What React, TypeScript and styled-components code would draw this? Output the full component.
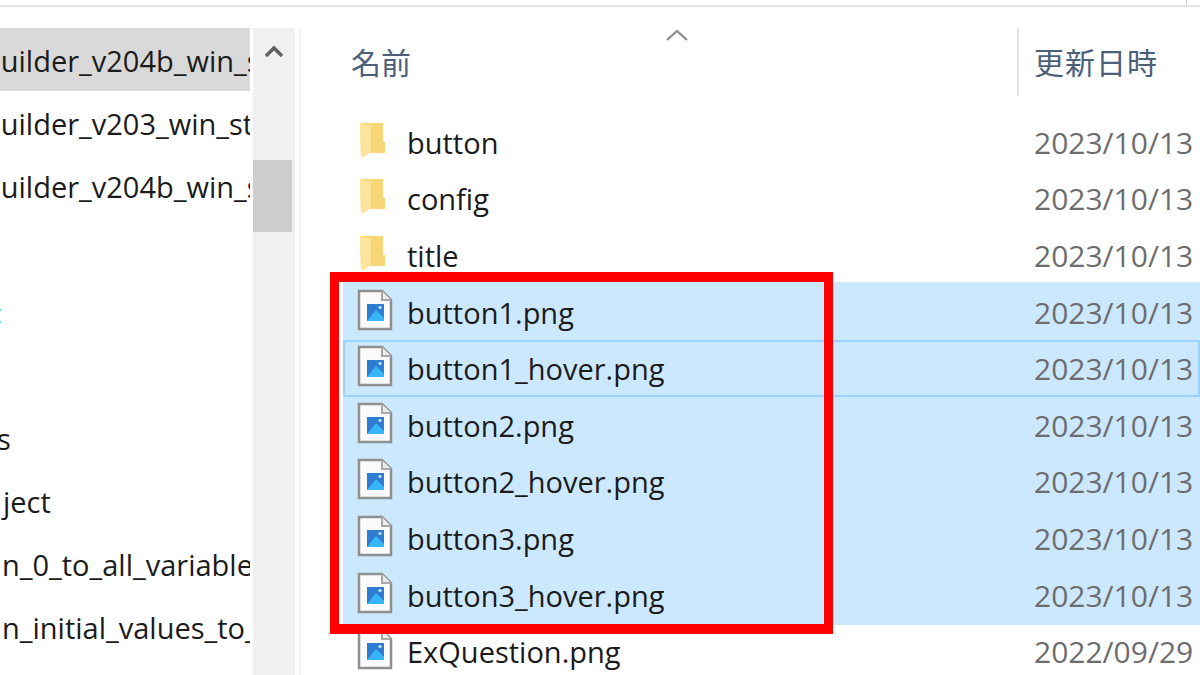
import styled, { createGlobalStyle } from 'styled-components';

const GlobalStyle = createGlobalStyle`
  html, body {
    margin: 0;
    padding: 0;
    background: #ffffff;
    overflow: hidden;
  }
`;

const Page = styled.div`
  position: relative;
  width: 1200px;
  height: 675px;
  overflow: hidden;
  background: #ffffff;
  font-family: 'Open Sans', 'Noto Sans', 'Noto Sans CJK JP', sans-serif;
`;

const TopEdge = styled.div`
  height: 5px;
  border-bottom: 2px solid #e3e3e3;
  margin-bottom: 21px;
  display: flex;
  justify-content: flex-end;
`;

const TopTick = styled.div`
  width: 1px;
  margin-right: 13px;
  background: #d4d4d4;
`;

const Panes = styled.div`
  display: flex;
  height: 648px;
`;

const NavPane = styled.div`
  width: 250px;
  flex: none;
  overflow: hidden;
`;

const NavRow = styled.div<{ $selected?: boolean }>`
  height: 63px;
  line-height: 66px;
  font-size: 29px;
  color: #1b1b1b;
  white-space: nowrap;
  background: ${(p) => (p.$selected ? '#d9d9d9' : 'transparent')};
`;

const NavLabel = styled.span<{ $shift: number; $tone?: string }>`
  display: inline-block;
  margin-left: ${(p) => p.$shift}px;
  color: ${(p) => p.$tone || 'inherit'};
`;

const ScrollBar = styled.div`
  width: 42px;
  flex: none;
  margin-left: 3px;
  background: #f0f0f0;
  display: flex;
  flex-direction: column;
`;

const ScrollArrow = styled.div`
  height: 132px;
  display: flex;
  justify-content: center;
  padding-top: 15px;
  box-sizing: border-box;
`;

const ScrollThumb = styled.div`
  width: 39px;
  height: 72px;
  background: #cdcdcd;
`;

const FilePane = styled.div`
  flex: 1;
  margin-left: 4px;
  border-left: 2px solid #f5f5f5;
  display: flex;
  flex-direction: column;
  min-width: 0;
`;

const HeaderBar = styled.div`
  position: relative;
  height: 68px;
  display: flex;
  flex: none;
`;

const SortChevron = styled.svg`
  position: absolute;
  left: 364px;
  top: 0;
`;

const NameHead = styled.div`
  width: 718px;
  flex: none;
  padding-left: 50px;
  box-sizing: border-box;
  font-size: 30px;
  line-height: 69px;
  color: #4c607a;
  border-right: 2px solid #e5e5e5;
`;

const DateHead = styled.div`
  padding-left: 15px;
  font-size: 30px;
  line-height: 69px;
  letter-spacing: 1px;
  white-space: nowrap;
  color: #4c607a;
`;

const FileList = styled.div`
  display: flex;
  flex-direction: column;
  padding: 18px 0 0 42px;
`;

const SelectionGroup = styled.div`
  margin: -2px 0;
  padding: 2px 0;
  background: #cce8ff;
`;

const FileRow = styled.div<{ $focused?: boolean }>`
  height: 56.6px;
  box-sizing: border-box;
  padding-left: 14px;
  display: flex;
  align-items: center;
  box-shadow: ${(p) => (p.$focused ? 'inset 0 0 0 2px #99d1ff' : 'none')};
`;

const IconSlot = styled.div`
  width: 50px;
  flex: none;
  display: flex;
  align-items: center;
  padding-bottom: 5px;
  svg {
    filter: blur(0.4px);
  }
`;

const FolderSlot = styled.span`
  display: flex;
  margin-left: 3px;
`;

const FileName = styled.div`
  width: 627px;
  flex: none;
  font-size: 29px;
  color: #1b1b1b;
  white-space: nowrap;
`;

const FileDate = styled.div`
  font-size: 30px;
  color: #6d6d6d;
  white-space: nowrap;
`;

const Highlight = styled.div`
  position: absolute;
  left: 330px;
  top: 272px;
  width: 503px;
  height: 362px;
  box-sizing: border-box;
  border-style: solid;
  border-color: #ff0000;
  border-width: 10px 9px;
  pointer-events: none;
`;

const FolderIcon = () => (
  <FolderSlot>
    <svg width="26" height="36" viewBox="0 0 26 36">
      <path d="M0 1h23v19h2v11H7l-3 4-3-1z" fill="#f8d674" />
      <path d="M0 1l11 3v26l-7 5-3-1z" fill="#fce49c" />
    </svg>
  </FolderSlot>
);

const ImageFileIcon = () => (
  <svg width="36" height="42" viewBox="0 0 36 42">
    <path d="M2 2h23l9 9v29H2z" fill="#fbfbfb" stroke="#8f8f8f" strokeWidth="2.5" />
    <path d="M25 2v9h9" fill="#ececec" stroke="#a8a8a8" strokeWidth="2" />
    <rect x="10" y="15" width="17" height="17" fill="#2f7cd3" />
    <path d="M10 32l9-11 8 8v3z" fill="#37b6f5" />
    <circle cx="23" cy="18.5" r="1.6" fill="#bfe6fb" />
  </svg>
);

type FileItem = { name: string; date: string; folder?: boolean; focused?: boolean };

const navItems = [
  { label: 'builder_v204b_win_standard', shift: -17, selected: true },
  { label: 'builder_v203_win_standard', shift: -17 },
  { label: 'builder_v204b_win_standard', shift: -17 },
  { label: '', shift: 0 },
  { label: ':', shift: -5, tone: '#4a9ff0' },
  { label: '', shift: 0 },
  { label: 's', shift: -3 },
  { label: 'ject', shift: 3 },
  { label: 'n_0_to_all_variables', shift: 2 },
  { label: 'n_initial_values_to_all', shift: 2 },
];

const folders: FileItem[] = [
  { name: 'button', date: '2023/10/13', folder: true },
  { name: 'config', date: '2023/10/13', folder: true },
  { name: 'title', date: '2023/10/13', folder: true },
];

const selectedFiles: FileItem[] = [
  { name: 'button1.png', date: '2023/10/13' },
  { name: 'button1_hover.png', date: '2023/10/13', focused: true },
  { name: 'button2.png', date: '2023/10/13' },
  { name: 'button2_hover.png', date: '2023/10/13' },
  { name: 'button3.png', date: '2023/10/13' },
  { name: 'button3_hover.png', date: '2023/10/13' },
];

const otherFiles: FileItem[] = [{ name: 'ExQuestion.png', date: '2022/09/29' }];

const renderRow = (file: FileItem) => (
  <FileRow key={file.name} $focused={file.focused}>
    <IconSlot>{file.folder ? <FolderIcon /> : <ImageFileIcon />}</IconSlot>
    <FileName>{file.name}</FileName>
    <FileDate>{file.date}</FileDate>
  </FileRow>
);

export default function App() {
  return (
    <Page>
      <GlobalStyle />
      <TopEdge>
        <TopTick />
      </TopEdge>
      <Panes>
        <NavPane>
          {navItems.map((item, i) => (
            <NavRow key={i} $selected={item.selected}>
              <NavLabel $shift={item.shift} $tone={item.tone}>{item.label}</NavLabel>
            </NavRow>
          ))}
        </NavPane>
        <ScrollBar>
          <ScrollArrow>
            <svg width="20" height="15" viewBox="0 0 20 15">
              <path d="M2 13l8-8 8 8" fill="none" stroke="#606060" strokeWidth="3.5" />
            </svg>
          </ScrollArrow>
          <ScrollThumb />
        </ScrollBar>
        <FilePane>
          <HeaderBar>
            <SortChevron width="24" height="14" viewBox="0 0 24 14">
              <path d="M2 12L12 3l10 9" fill="none" stroke="#8c8c8c" strokeWidth="2.2" />
            </SortChevron>
            <NameHead>名前</NameHead>
            <DateHead>更新日時</DateHead>
          </HeaderBar>
          <FileList>
            {folders.map(renderRow)}
            <SelectionGroup>{selectedFiles.map(renderRow)}</SelectionGroup>
            {otherFiles.map(renderRow)}
          </FileList>
        </FilePane>
      </Panes>
      <Highlight />
    </Page>
  );
}
